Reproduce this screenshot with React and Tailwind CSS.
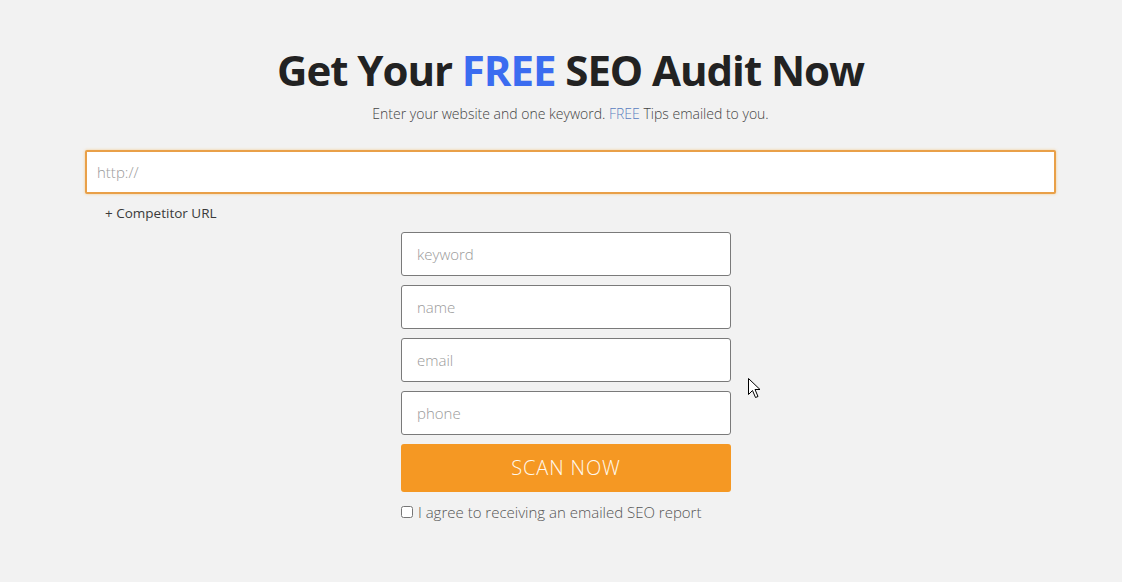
import { useState } from 'react';

const Field = ({ placeholder }) => (
  <input
    type="text"
    placeholder={placeholder}
    className="w-full h-[44px] rounded-[3px] border border-[#7a7a7a] bg-white px-[15px] text-[15px] font-light text-[#333] placeholder:text-[#9a9a9a] outline-none"
  />
);

const Cursor = () => (
  <svg width="13" height="21" viewBox="0 0 13 21" className="absolute left-[748px] top-[378px]">
    <path
      d="M0.5 0.5 L0.5 16.5 L4.5 12.5 L7.5 19.5 L10 18.5 L7 11.5 L12 11.5 Z"
      fill="#fff"
      stroke="#000"
      strokeWidth="1"
      strokeLinejoin="miter"
    />
  </svg>
);

export default function App() {
  const [agree, setAgree] = useState(false);

  return (
    <div
      className="relative w-full h-[582px] bg-[#f2f2f2] text-[#333]"
      style={{ fontFamily: '"Open Sans", "Liberation Sans", sans-serif' }}
    >
      <div className="pt-[41px] ml-[85px] w-[971px]">
        <h1 className="text-center text-[42px] leading-[58px] font-bold tracking-[-1.05px] text-[#222]">
          Get Your <span className="text-[#3b6cf0]">FREE</span> SEO Audit Now
        </h1>
        <p className="mt-[5px] text-center text-[14px] leading-[20px] font-light text-[#444]">
          Enter your website and one keyword. <span className="text-[#5a80c0]">FREE</span> Tips emailed to you.
        </p>

        <input
          type="text"
          placeholder="http://"
          className="mt-[26px] block w-full h-[44px] rounded-[2px] border-2 border-[#e9a048] bg-white px-[10px] text-[15px] font-light placeholder:text-[#9a9a9a] outline-none shadow-[0_0_3px_rgba(245,180,80,0.6)]"
        />

        <button className="mt-[10px] ml-[20px] text-[13.5px] leading-[18px] font-normal text-[#3a3a3a]">+ Competitor URL</button>

        <div className="mt-[8px] ml-[316px] w-[330px] flex flex-col gap-[9px]">
          <Field placeholder="keyword" />
          <Field placeholder="name" />
          <Field placeholder="email" />
          <Field placeholder="phone" />
          <button className="h-[48px] rounded-[3px] bg-[#f59823] text-[20px] font-light tracking-[0.9px] text-[#fff8ee]">
            SCAN NOW
          </button>
          <label className="flex items-center gap-[5px] text-[15px] font-light text-[#555]">
            <input
              type="checkbox"
              checked={agree}
              onChange={(e) => setAgree(e.target.checked)}
              className="w-[12px] h-[12px] m-0"
            />
            I agree to receiving an emailed SEO report
          </label>
        </div>
      </div>
      <Cursor />
    </div>
  );
}
